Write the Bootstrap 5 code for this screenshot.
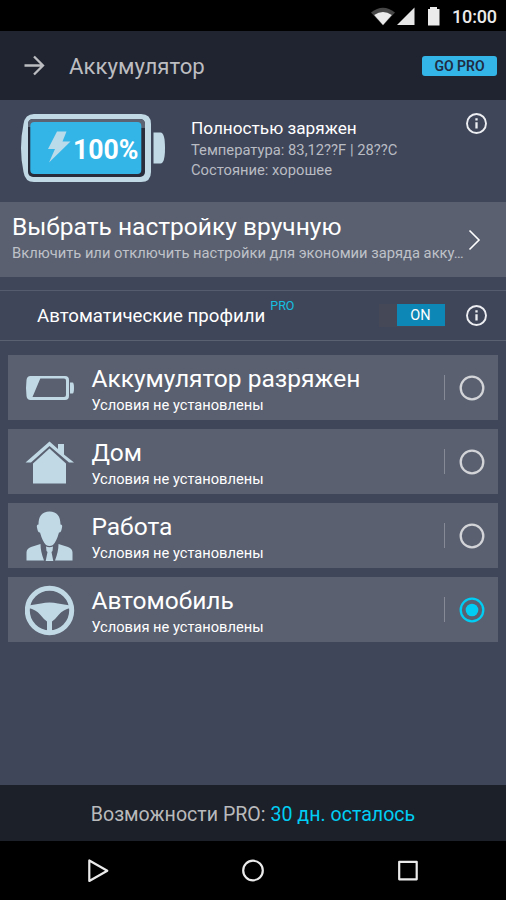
<!DOCTYPE html>
<html lang="ru">
<head>
<meta charset="utf-8">
<meta name="viewport" content="width=device-width, initial-scale=1">
<title>Аккумулятор</title>
<link href="https://cdn.jsdelivr.net/npm/bootstrap@5.3.0/dist/css/bootstrap.min.css" rel="stylesheet">
<style>
body{font-family:Roboto,sans-serif;background:#3f4659;color:#fff;height:900px;overflow:hidden}
svg{display:block;flex:none}
.status{height:31px;background:#000;padding:1px 10px 0 0;font-size:18px;font-weight:500;color:#ebebeb}
.clock{width:44px;white-space:nowrap;letter-spacing:-.15px}
.appbar{height:69px;background:#1f2430;padding:0 9px 0 22px}
.appname{font-size:22.2px;color:#bcbdc0;margin-left:21px;padding-top:2px}
.gopro{width:75px;height:20px;line-height:20px;border-radius:3px;background:#34b5e8;color:#1f2c42;font-size:14px;font-weight:600}
.state{height:102px;padding:0 17px 0 19px}
.battery{margin-top:7px}
.statetext{margin:17px 0 0 24px;white-space:nowrap}
.l20{font-size:14.75px;line-height:20px;color:#b9bcc3}
.full{font-size:17.2px;line-height:22px;margin-bottom:1px}
.manual{height:75px;background:#5a6070;padding:10px 25px 0 12px}
.big{font-size:24.55px;line-height:30px;white-space:nowrap}
.manual .l20{margin-top:1px;font-size:14.73px;color:#bfc2c8;white-space:nowrap}
.chevron{margin-top:17px}
.auto{height:51px;margin-top:13px;border-top:1px solid #555c6d;border-bottom:1px solid #5a6171;padding:0 17px 0 37px}
.autoname{font-size:18.65px;padding-top:2px;white-space:nowrap}
.protag{font-size:12.5px;color:#16bfe0;margin:-19px 0 0 5px}
.switch-on{width:66px;height:23px;background:#444857;margin-right:19.500px}
.knob{width:48px;height:22px;background:#0d88b6;font-size:14.5px;line-height:23px}
.profiles{padding:14px 8px 0;gap:9px}
.profile{height:65px;background:#5a6070;padding:0 13px 0 17px}
.ptext{margin:9px 0 0 16.4px;align-self:flex-start}
.psub{font-size:14.65px;line-height:20px;margin-top:1px;white-space:nowrap}
.sep{width:1px;height:25px;background:#868a96;margin-right:14px}
.trial{height:56px;background:#1c2029;font-size:19.6px;color:#b9babc;padding-top:3px}
.cy{color:#00cdf3}
.keys{height:59px;background:#000}
</style>
</head>
<body class="d-flex flex-column">
<div class="status d-flex align-items-center justify-content-end flex-shrink-0">
  <svg width="82" height="27" viewBox="370 2 82 27"><path d="M371 11.500Q383 2 395 11.500L383 24.500z" fill="#464646"/><path d="M374.200 14Q383 8 391.800 14L383 24z" fill="#ebebeb"/><path d="M414.500 6.500V24H397z" fill="#e6e6e6"/><path d="M430 6h7v2h2.500v16.500h-11.500V8h2z" fill="#ebebeb"/></svg>
  <span class="clock">10:00</span>
</div>
<header class="appbar d-flex align-items-center flex-shrink-0">
  <svg width="26" height="26" viewBox="22 53 26 26" fill="none" stroke="#bcbdc0" stroke-width="2.300"><path d="M24.500 65.500H43M34 56.500l9 9-9 9"/></svg>
  <div class="appname me-auto">Аккумулятор</div>
  <div class="gopro text-center">GO PRO</div>
</header>
<section class="state d-flex align-items-start flex-shrink-0">
  <svg class="battery" width="148" height="80" viewBox="19 107 148 80">
    <path d="M34 114H141Q151 114 151 124V172Q151 182 141 182H34Q25 182 23.500 172Q18.500 148 23.500 124Q25 114 34 114z" fill="#c1d9e5"/>
    <rect x="28" y="119" width="117" height="58" rx="5" fill="#292c3b"/><path d="M28 127v-3q0-5 5-5H140q5 0 5 5v4z" fill="#5c6474"/>
    <rect x="30.300" y="122" width="111" height="52" rx="4" fill="#34b5e8"/>
    <path d="M57 131.500h9.500l-4 10H70.500L49 162.500 55 149H48z" fill="#b9dbea"/>
    <path d="M153.500 132.500h7q4.500 0 4.500 15.500t-4.500 15.500h-7z" fill="#c1d9e5"/>
    <text x="73" y="158.500" font-size="27" font-weight="700" fill="#fff" textLength="65.500" lengthAdjust="spacingAndGlyphs">100%</text>
  </svg>
  <div class="statetext me-auto">
    <div class="full">Полностью заряжен</div>
    <div class="l20">Температура: 83,12??F | 28??C</div>
    <div class="l20">Состояние: хорошее</div>
  </div>
  <svg class="mt-2" width="25" height="32" viewBox="0 0 25 32" fill="none" stroke="#eceef1" stroke-width="1.900"><circle cx="12.500" cy="15.500" r="9.500"/><path d="M12.500 14.300v6.200M12.500 10.300v2.200" stroke-width="2.300"/></svg>
</section>
<section class="manual d-flex justify-content-between flex-shrink-0">
  <div>
    <div class="big">Выбрать настройку вручную</div>
    <div class="l20">Включить или отключить настройки для экономии заряда акку…</div>
  </div>
  <svg class="chevron" width="13" height="22" viewBox="0 0 13 22" fill="none" stroke="#fff" stroke-width="1.600"><path d="M1.500 1.500l9.500 9.500-9.500 9.500"/></svg>
</section>
<section class="auto d-flex align-items-center flex-shrink-0">
  <div class="autoname">Автоматические профили</div>
  <div class="protag me-auto">PRO</div>
  <div class="switch-on d-flex justify-content-end"><div class="knob text-center">ON</div></div>
  <svg width="25" height="25" viewBox="0 0 25 25" fill="none" stroke="#eceef1" stroke-width="1.900"><circle cx="12.500" cy="12.500" r="9.500"/><path d="M12.500 11.300v6.200M12.500 7.300v2.200" stroke-width="2.300"/></svg>
</section>
<main class="profiles d-flex flex-column flex-grow-1">
  <div class="profile d-flex align-items-center flex-shrink-0">
    <svg width="50" height="52" viewBox="25 362 50 52"><path fill-rule="evenodd" fill="#c1d9e5" d="M30.500 376H65Q69 376 69 380V396Q69 400 65 400H30.500Q27 400 26.500 396Q25.500 388 26.500 380Q27 376 30.500 376zM40.300 378.500L32.500 397H64Q66 397 66 395V380.500Q66 378.500 64 378.500z"/><path fill="#c1d9e5" d="M70 382.500h2.500q1.500 0 1.500 5.500t-1.500 5.500H70z"/></svg>
    <div class="ptext me-auto"><div class="big">Аккумулятор разряжен</div><div class="psub">Условия не установлены</div></div>
    <div class="sep"></div>
    <svg width="26" height="26" viewBox="0 0 26 26" fill="none" stroke="#d2d4d8" stroke-width="2.300"><circle cx="13" cy="13" r="11.300"/></svg>
  </div>
  <div class="profile d-flex align-items-center flex-shrink-0">
    <svg width="50" height="52" viewBox="25 435.500 50 52" fill="#c1d9e5"><path d="M25.500 462L49.500 441 58 448.500V443.500h6v10.500L74 462h-5L49.500 445.500 31 462z"/><path d="M33 463L49.500 448 66 463V483H33z"/></svg>
    <div class="ptext me-auto"><div class="big">Дом</div><div class="psub">Условия не установлены</div></div>
    <div class="sep"></div>
    <svg width="26" height="26" viewBox="0 0 26 26" fill="none" stroke="#d2d4d8" stroke-width="2.300"><circle cx="13" cy="13" r="11.300"/></svg>
  </div>
  <div class="profile d-flex align-items-center flex-shrink-0">
    <svg width="50" height="52" viewBox="25 509.500 50 52" fill="#c1d9e5"><path d="M49.500 511C57 511 60.500 516 60.500 524Q63 524 61.800 528Q61 532.500 59 532Q56.500 541 53 544.500Q49.500 546.500 46 544.500Q42.500 541 40 532Q38 532.500 37.200 528Q36 524 38.500 524C38.500 516 42 511 49.500 511z"/><path d="M40.500 543.500Q40.500 551 44 560H26.500V552Q26.500 548 31 546.500zM58.500 543.500Q58.500 551 55 560H72.500V552Q72.500 548 68 546.500zM46 546q3.500 1.500 7 0l-.5 4.500-1 1 1.800 9H45.700l1.800-9-1-1z"/></svg>
    <div class="ptext me-auto"><div class="big">Работа</div><div class="psub">Условия не установлены</div></div>
    <div class="sep"></div>
    <svg width="26" height="26" viewBox="0 0 26 26" fill="none" stroke="#d2d4d8" stroke-width="2.300"><circle cx="13" cy="13" r="11.300"/></svg>
  </div>
  <div class="profile d-flex align-items-center flex-shrink-0">
    <svg width="50" height="52" viewBox="25 583.500 50 52"><circle cx="49.500" cy="610" r="22.200" fill="none" stroke="#c1d9e5" stroke-width="5"/><path fill="#c1d9e5" d="M28.500 605Q35 604 41 603Q49.500 601 58 603Q64 604 70.500 605V607.500Q63 609 59 614Q55 619 52 621V632H47V621Q44 619 40 614Q36 609 28.500 607.500z"/></svg>
    <div class="ptext me-auto"><div class="big">Автомобиль</div><div class="psub">Условия не установлены</div></div>
    <div class="sep"></div>
    <svg width="26" height="26" viewBox="0 0 26 26"><circle cx="13" cy="13" r="11.300" fill="none" stroke="#00cdf3" stroke-width="2.300"/><circle cx="13" cy="13" r="6.300" fill="#00cdf3"/></svg>
  </div>
</main>
<footer class="trial d-flex align-items-center justify-content-center flex-shrink-0"><div>Возможности PRO: <span class="cy">30 дн. осталось</span></div></footer>
<nav class="keys flex-shrink-0">
  <svg width="506" height="59" viewBox="0 841 506 59" fill="none" stroke="#ebebeb" stroke-width="2.200" stroke-linejoin="round"><path d="M89.300 860.500V881L107.300 870.700z"/><circle cx="253" cy="870.500" r="9.800"/><rect x="399.200" y="861.800" width="17.500" height="17.500"/></svg>
</nav>
<script src="https://cdn.jsdelivr.net/npm/bootstrap@5.3.0/dist/js/bootstrap.bundle.min.js"></script>
</body>
</html>
